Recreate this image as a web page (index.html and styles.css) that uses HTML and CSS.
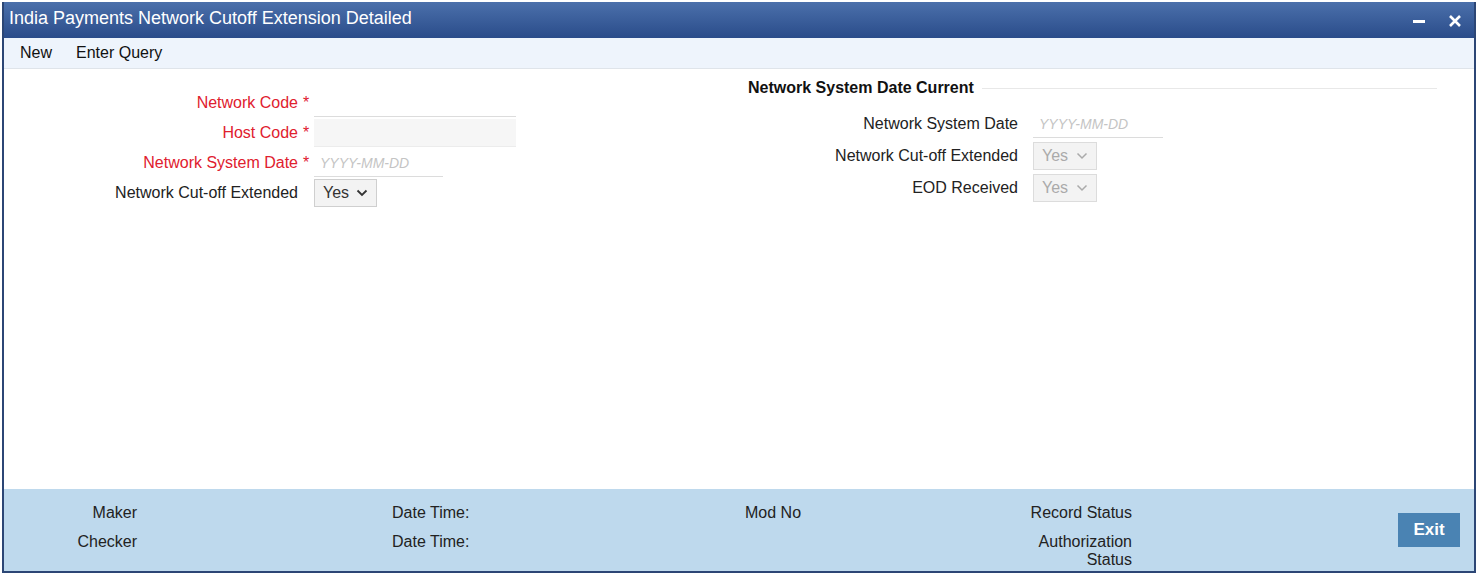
FILE: index.html
```html
<!DOCTYPE html>
<html lang="en">
<head>
  <meta charset="UTF-8" />
  <title>India Payments Network Cutoff Extension Detailed</title>
  <link rel="stylesheet" href="styles.css">
</head>
<body>
  <div class="window">
    <div class="titlebar">
      <span class="title">India Payments Network Cutoff Extension Detailed</span>
      <div class="win-buttons">
        <svg width="14" height="14" viewBox="0 0 14 14"><rect x="1" y="6" width="12" height="3" fill="#fff"/></svg>
        <svg width="14" height="14" viewBox="0 0 14 14"><path d="M2 2 L12 12 M12 2 L2 12" stroke="#fff" stroke-width="2.6"/></svg>
      </div>
    </div>

    <div class="toolbar">
      <span>New</span>
      <span>Enter Query</span>
    </div>

    <div class="main">
      <div class="form-left">
        <label class="req">Network Code</label><span class="star">*</span>
        <div><div class="input w202"></div></div>

        <label class="req">Host Code</label><span class="star">*</span>
        <div><div class="input w202 filled"></div></div>

        <label class="req">Network System Date</label><span class="star">*</span>
        <div><div class="input w129"><span class="ph">YYYY-MM-DD</span></div></div>

        <label>Network Cut-off Extended</label><span class="star"></span>
        <div>
          <div class="select">
            <span>Yes</span>
            <svg width="12" height="8" viewBox="0 0 12 8"><path d="M1.5 1.5 L6 6 L10.5 1.5" fill="none" stroke="#333" stroke-width="1.8"/></svg>
          </div>
        </div>
      </div>

      <div class="form-right">
        <div class="legend">Network System Date Current</div>
        <div class="form-grid">
          <label>Network System Date</label>
          <div><div class="input w130"><span class="ph">YYYY-MM-DD</span></div></div>

          <label>Network Cut-off Extended</label>
          <div>
            <div class="select disabled">
              <span>Yes</span>
              <svg width="12" height="8" viewBox="0 0 12 8"><path d="M1.5 1.5 L6 6 L10.5 1.5" fill="none" stroke="#aaa" stroke-width="1.5"/></svg>
            </div>
          </div>

          <label>EOD Received</label>
          <div>
            <div class="select disabled">
              <span>Yes</span>
              <svg width="12" height="8" viewBox="0 0 12 8"><path d="M1.5 1.5 L6 6 L10.5 1.5" fill="none" stroke="#aaa" stroke-width="1.5"/></svg>
            </div>
          </div>
        </div>
      </div>
    </div>

    <div class="footer">
      <div class="audit">
        <span class="r">Maker</span>
        <span></span>
        <span>Date Time:</span>
        <span>Mod No</span>
        <span class="r">Record Status</span>

        <span class="r">Checker</span>
        <span></span>
        <span>Date Time:</span>
        <span></span>
        <span class="r">Authorization<br>Status</span>
      </div>
      <button class="exit">Exit</button>
    </div>
  </div>
</body>
</html>
```

FILE: styles.css
```css
body {
  margin: 0;
  font-family: "Liberation Sans", Arial, sans-serif;
  font-size: 16px;
  color: #222;
  background: white;
}

.window {
  box-sizing: border-box;
  height: 571px;
  margin: 2px 2px 0 2px;
  border-left: 2px solid #2c4675;
  border-right: 2px solid #2c4675;
  border-bottom: 2px solid #2c4675;
  display: flex;
  flex-direction: column;
}

.titlebar {
  box-sizing: border-box;
  height: 36px;
  flex-shrink: 0;
  display: flex;
  align-items: center;
  justify-content: space-between;
  padding: 0 12px 3px 5px;
  background: linear-gradient(#4b70ab, #2a4c8a);
  color: white;
}

.title {
  font-size: 18px;
}

.win-buttons {
  display: flex;
  gap: 22px;
  padding-top: 4px;
}

.toolbar {
  height: 30px;
  flex-shrink: 0;
  display: flex;
  align-items: center;
  gap: 24px;
  padding-left: 16px;
  background: #eef4fc;
  border-bottom: 1px solid #dfe4ea;
  color: #111;
}

.main {
  flex: 1;
  display: flex;
}

.form-left {
  width: 744px;
  padding-top: 19px;
  display: grid;
  grid-template-columns: 294px 16px auto;
  grid-auto-rows: 30px;
  align-content: start;
  align-items: center;
}

label {
  text-align: right;
  color: #222;
}

label.req {
  color: #e0202e;
}

.star {
  color: #e0202e;
  padding-left: 5px;
}

.input {
  box-sizing: border-box;
  height: 28px;
  border-bottom: 1px solid #dcdcdc;
  display: flex;
  align-items: center;
  padding-left: 6px;
}

.input.filled {
  background: #f6f6f6;
  border-bottom-color: #ececec;
}

.w202 { width: 202px; }
.w129 { width: 129px; }
.w130 { width: 130px; }

.ph {
  font-style: italic;
  font-size: 14px;
  color: #c4c4c4;
}

.select {
  box-sizing: border-box;
  width: 63px;
  height: 28px;
  border: 1px solid #cfcfcf;
  background: #f3f3f3;
  display: flex;
  align-items: center;
  justify-content: space-between;
  padding: 0 8px 0 8px;
  color: #333;
}

.select.disabled {
  width: 64px;
  color: #aaa;
  border-color: #dcdcdc;
}

.form-right {
  flex: 1;
  padding: 10px 37px 0 0;
}

.legend {
  display: flex;
  align-items: center;
  gap: 8px;
  font-weight: bold;
  line-height: 18px;
  color: #111;
}

.legend::after {
  content: "";
  flex: 1;
  border-top: 1px solid #e8e8e8;
}

.form-grid {
  margin-top: 11px;
  display: grid;
  grid-template-columns: 270px auto;
  column-gap: 15px;
  grid-auto-rows: 32px;
  align-items: center;
}

.footer {
  height: 82px;
  flex-shrink: 0;
  display: flex;
  justify-content: space-between;
  align-items: center;
  background: #bed9ed;
  padding-right: 14px;
}

.audit {
  align-self: flex-start;
  padding-top: 15px;
  display: grid;
  grid-template-columns: 133px 255px 353px 200px 187px;
  row-gap: 11px;
  line-height: 18px;
  color: #222;
}

.audit .r {
  text-align: right;
}

.exit {
  width: 62px;
  height: 34px;
  border: none;
  background: #4a83b3;
  color: white;
  font-family: inherit;
  font-size: 17px;
  font-weight: bold;
}
```
